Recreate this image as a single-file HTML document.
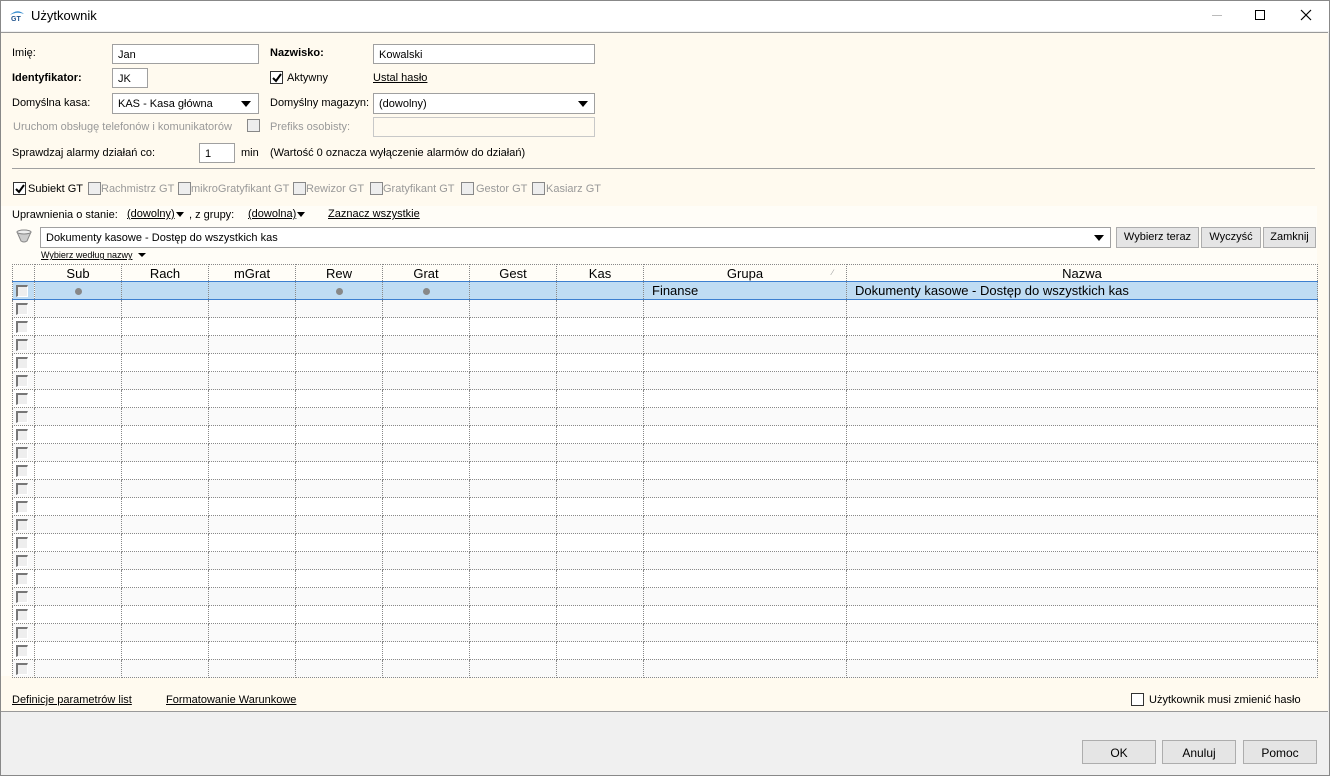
<!DOCTYPE html>
<html><head><meta charset="utf-8"><style>
*{box-sizing:border-box;margin:0;padding:0}
body{width:1330px;height:776px;position:relative;overflow:hidden;font-family:"Liberation Sans",sans-serif;font-size:11px;color:#000;background:#f0f0f0}
.a{position:absolute;white-space:nowrap}
.win{position:absolute;left:0;top:0;width:1330px;height:776px;border:1px solid #888}
.title{left:1px;top:1px;width:1328px;height:30px;background:#fff}
.cream{left:1px;top:32px;width:1327px;height:680px;background:#fffaef;border-top:1px solid #999;border-bottom:1px solid #999}
.inp{position:absolute;background:#fff;border:1px solid #a0a0a0;height:20px;padding:4px 0 0 5px;font-size:11px}
.dis{background:#fffaef;border-color:#c8c8c8}
.tri{position:absolute;width:0;height:0;border-left:5px solid transparent;border-right:5px solid transparent;border-top:6px solid #000}
.cb{position:absolute;width:13px;height:13px;border:1px solid #333;background:#fff}
.cbg{position:absolute;width:13px;height:13px;border:1px solid #888;background:#eee}
.g{color:#999}
.u{text-decoration:underline}
.btn{position:absolute;border:1px solid #adadad;background:#e5e5e5;text-align:center;font-size:12px}
table{position:absolute;left:12px;top:264px;border-collapse:collapse;width:1306px;table-layout:fixed;font-size:13px}
td{border:1px dotted #888;height:18px;padding:0}
tr.h td{text-align:center;height:17px;background:#fffdf7}
tr:nth-child(odd) td{background:#fafafa}
tr:nth-child(even) td{background:#fff}
tr.h td{background:#fffdf7!important}
tr.s td{background:#bfdcf3!important;border-top:1px solid #3c7fd0;border-bottom:1px solid #3c7fd0}
td.c{position:relative}
td.c i{position:absolute;left:3px;top:3px;width:12px;height:12px;border-left:2px solid #777;border-top:2px solid #777;background:#eee;border-right:1px solid #fff;border-bottom:1px solid #fff}
.d{display:inline-block;width:7px;height:7px;border-radius:50%;background:#888}
</style></head><body>
<div class="win"></div>
<div class="a title"></div>
<svg class="a" style="left:9px;top:8px" width="16" height="14" viewBox="0 0 16 14"><path d="M1 7 Q8 0 15 6 Q8 3 1 7Z" fill="#3a8fd0"/><text x="2" y="13" font-size="7" font-weight="bold" fill="#1a4f8a" font-family="Liberation Sans">GT</text></svg>
<div class="a" style="left:31px;top:8px;font-size:13px">Użytkownik</div>
<div class="a" style="left:1212px;top:15px;width:10px;height:1px;background:#bbb"></div>
<div class="a" style="left:1255px;top:10px;width:10px;height:10px;border:1px solid #000"></div>
<svg class="a" style="left:1300px;top:9px" width="12" height="12"><path d="M1 1L11 11M11 1L1 11" stroke="#000" stroke-width="1.2"/></svg>
<div class="a cream"></div>

<div class="a" style="left:12px;top:47px">Imię:</div>
<div class="inp" style="left:112px;top:44px;width:147px">Jan</div>
<div class="a" style="left:270px;top:47px;font-weight:bold">Nazwisko:</div>
<div class="inp" style="left:373px;top:44px;width:222px">Kowalski</div>

<div class="a" style="left:12px;top:72px;font-weight:bold">Identyfikator:</div>
<div class="inp" style="left:112px;top:68px;width:36px">JK</div>
<div class="cb" style="left:270px;top:71px"></div>
<svg class="a" style="left:271px;top:72px" width="12" height="12"><path d="M2 6L5 9L10 2" stroke="#000" stroke-width="2" fill="none"/></svg>
<div class="a" style="left:287px;top:72px">Aktywny</div>
<div class="a u" style="left:373px;top:72px">Ustal hasło</div>

<div class="a" style="left:12px;top:97px">Domyślna kasa:</div>
<div class="inp" style="left:112px;top:93px;width:147px;height:21px">KAS - Kasa główna</div>
<div class="tri" style="left:241px;top:101px"></div>
<div class="a" style="left:270px;top:97px">Domyślny magazyn:</div>
<div class="inp" style="left:373px;top:93px;width:222px;height:21px">(dowolny)</div>
<div class="tri" style="left:578px;top:101px"></div>

<div class="a g" style="left:13px;top:121px">Uruchom obsługę telefonów i komunikatorów</div>
<div class="cbg" style="left:247px;top:119px"></div>
<div class="a g" style="left:270px;top:121px">Prefiks osobisty:</div>
<div class="inp dis" style="left:373px;top:117px;width:222px"></div>

<div class="a" style="left:12px;top:147px">Sprawdzaj alarmy działań co:</div>
<div class="inp" style="left:199px;top:143px;width:36px">1</div>
<div class="a" style="left:241px;top:147px">min</div>
<div class="a" style="left:270px;top:147px">(Wartość 0 oznacza wyłączenie alarmów do działań)</div>

<div class="a" style="left:12px;top:168px;width:1303px;height:1px;background:#a0a0a0"></div>

<div class="cb" style="left:13px;top:182px"></div>
<svg class="a" style="left:14px;top:183px" width="12" height="12"><path d="M2 6L5 9L10 2" stroke="#000" stroke-width="2" fill="none"/></svg>
<div class="a" style="left:28px;top:183px">Subiekt GT</div>
<div class="cbg" style="left:88px;top:182px"></div><div class="a g" style="left:101px;top:183px">Rachmistrz GT</div>
<div class="cbg" style="left:178px;top:182px"></div><div class="a g" style="left:191px;top:183px">mikroGratyfikant GT</div>
<div class="cbg" style="left:293px;top:182px"></div><div class="a g" style="left:306px;top:183px">Rewizor GT</div>
<div class="cbg" style="left:370px;top:182px"></div><div class="a g" style="left:383px;top:183px">Gratyfikant GT</div>
<div class="cbg" style="left:461px;top:182px"></div><div class="a g" style="left:476px;top:183px">Gestor GT</div>
<div class="cbg" style="left:532px;top:182px"></div><div class="a g" style="left:546px;top:183px">Kasiarz GT</div>

<div class="a" style="left:1px;top:206px;width:1316px;height:470px;background:#fffdf7"></div>
<div class="a" style="left:12px;top:209px;font-size:11px">Uprawnienia o stanie:</div>
<div class="a u" style="left:127px;top:208px;font-size:11px">(dowolny)</div><div class="tri" style="left:176px;top:212px;border-width:5px 4px 0 4px"></div>
<div class="a" style="left:189px;top:209px;font-size:11px">, z grupy:</div>
<div class="a u" style="left:248px;top:208px;font-size:11px">(dowolna)</div><div class="tri" style="left:297px;top:212px;border-width:5px 4px 0 4px"></div>
<div class="a u" style="left:328px;top:208px;font-size:11px">Zaznacz wszystkie</div>

<svg class="a" style="left:16px;top:229px" width="16" height="14"><path d="M1 3Q8 -1 15 3L11 12Q8 14 5 12Z" fill="#ccc" stroke="#888"/><ellipse cx="8" cy="3" rx="7" ry="2" fill="#eee" stroke="#888"/></svg>
<div class="inp" style="left:40px;top:227px;width:1071px;height:21px;font-size:11px">Dokumenty kasowe - Dostęp do wszystkich kas</div>
<div class="tri" style="left:1094px;top:235px;border-width:6px 5px 0 5px"></div>
<div class="btn" style="left:1116px;top:227px;width:83px;height:21px;padding-top:3px;font-size:11px">Wybierz teraz</div>
<div class="btn" style="left:1201px;top:227px;width:60px;height:21px;padding-top:3px;font-size:11px">Wyczyść</div>
<div class="btn" style="left:1263px;top:227px;width:53px;height:21px;padding-top:3px;font-size:11px">Zamknij</div>
<div class="a u" style="left:41px;top:250px;font-size:9px">Wybierz według nazwy</div><div class="tri" style="left:138px;top:253px;border-width:4px 4px 0 4px"></div>

<table>
<colgroup><col style="width:22px"><col style="width:87px"><col style="width:87px"><col style="width:87px"><col style="width:87px"><col style="width:87px"><col style="width:87px"><col style="width:87px"><col style="width:203px"><col></colgroup>
<tr class="h"><td></td><td>Sub</td><td>Rach</td><td>mGrat</td><td>Rew</td><td>Grat</td><td>Gest</td><td>Kas</td><td>Grupa</td><td>Nazwa</td></tr>
<tr class="s"><td class="c"><i></i></td><td style="text-align:center"><span class="d"></span></td><td></td><td></td><td style="text-align:center"><span class="d"></span></td><td style="text-align:center"><span class="d"></span></td><td></td><td></td><td style="padding-left:8px">Finanse</td><td style="padding-left:8px">Dokumenty kasowe - Dostęp do wszystkich kas</td></tr>
<tr><td class="c"><i></i></td><td></td><td></td><td></td><td></td><td></td><td></td><td></td><td></td><td></td></tr>
<tr><td class="c"><i></i></td><td></td><td></td><td></td><td></td><td></td><td></td><td></td><td></td><td></td></tr>
<tr><td class="c"><i></i></td><td></td><td></td><td></td><td></td><td></td><td></td><td></td><td></td><td></td></tr>
<tr><td class="c"><i></i></td><td></td><td></td><td></td><td></td><td></td><td></td><td></td><td></td><td></td></tr>
<tr><td class="c"><i></i></td><td></td><td></td><td></td><td></td><td></td><td></td><td></td><td></td><td></td></tr>
<tr><td class="c"><i></i></td><td></td><td></td><td></td><td></td><td></td><td></td><td></td><td></td><td></td></tr>
<tr><td class="c"><i></i></td><td></td><td></td><td></td><td></td><td></td><td></td><td></td><td></td><td></td></tr>
<tr><td class="c"><i></i></td><td></td><td></td><td></td><td></td><td></td><td></td><td></td><td></td><td></td></tr>
<tr><td class="c"><i></i></td><td></td><td></td><td></td><td></td><td></td><td></td><td></td><td></td><td></td></tr>
<tr><td class="c"><i></i></td><td></td><td></td><td></td><td></td><td></td><td></td><td></td><td></td><td></td></tr>
<tr><td class="c"><i></i></td><td></td><td></td><td></td><td></td><td></td><td></td><td></td><td></td><td></td></tr>
<tr><td class="c"><i></i></td><td></td><td></td><td></td><td></td><td></td><td></td><td></td><td></td><td></td></tr>
<tr><td class="c"><i></i></td><td></td><td></td><td></td><td></td><td></td><td></td><td></td><td></td><td></td></tr>
<tr><td class="c"><i></i></td><td></td><td></td><td></td><td></td><td></td><td></td><td></td><td></td><td></td></tr>
<tr><td class="c"><i></i></td><td></td><td></td><td></td><td></td><td></td><td></td><td></td><td></td><td></td></tr>
<tr><td class="c"><i></i></td><td></td><td></td><td></td><td></td><td></td><td></td><td></td><td></td><td></td></tr>
<tr><td class="c"><i></i></td><td></td><td></td><td></td><td></td><td></td><td></td><td></td><td></td><td></td></tr>
<tr><td class="c"><i></i></td><td></td><td></td><td></td><td></td><td></td><td></td><td></td><td></td><td></td></tr>
<tr><td class="c"><i></i></td><td></td><td></td><td></td><td></td><td></td><td></td><td></td><td></td><td></td></tr>
<tr><td class="c"><i></i></td><td></td><td></td><td></td><td></td><td></td><td></td><td></td><td></td><td></td></tr>
<tr><td class="c"><i></i></td><td></td><td></td><td></td><td></td><td></td><td></td><td></td><td></td><td></td></tr>
</table>
<div class="a" style="left:832px;top:268px;font-size:8px;color:#999">∕</div>

<div class="a u" style="left:12px;top:694px;font-size:11px">Definicje parametrów list</div>
<div class="a u" style="left:166px;top:694px;font-size:11px">Formatowanie Warunkowe</div>
<div class="cb" style="left:1131px;top:693px"></div>
<div class="a" style="left:1149px;top:694px">Użytkownik musi zmienić hasło</div>

<div class="btn" style="left:1082px;top:740px;width:74px;height:24px;padding-top:5px">OK</div>
<div class="btn" style="left:1162px;top:740px;width:74px;height:24px;padding-top:5px">Anuluj</div>
<div class="btn" style="left:1243px;top:740px;width:74px;height:24px;padding-top:5px">Pomoc</div>
</body></html>
